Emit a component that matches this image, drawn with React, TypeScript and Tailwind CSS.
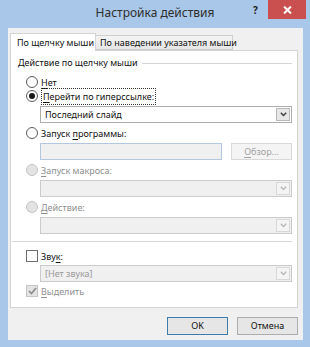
import React from 'react';

const font = { fontFamily: '"Noto Sans", "DejaVu Sans", sans-serif' };

const Chevron = ({ disabled }: { disabled?: boolean }) => (
    <svg width="7" height="5" viewBox="0 0 7 5">
        <path d="M0.8 0.8 L3.5 3.6 L6.2 0.8" fill="none" stroke={disabled ? '#b8b8b8' : '#3c3c3c'} strokeWidth="1.4" />
    </svg>
);

const Dropdown = ({ text, disabled, grayText }: { text?: string; disabled?: boolean; grayText?: boolean }) => (
    <div
        className={`flex items-center h-[17px] border ${
            disabled ? 'border-[#cbcbcb] bg-[#f0f0f0]' : 'border-[#adadad] bg-white'
        }`}
    >
        <span className={`flex-1 pl-[4px] leading-none ${grayText ? 'text-[#9a9a9a]' : 'text-[#111]'}`}>{text}</span>
        <div
            className={`w-[14px] h-[13px] mr-[1px] flex items-center justify-center border ${
                disabled ? 'border-[#d8d8d8] bg-[#f4f4f4]' : 'border-[#b9b9b9] bg-[#e6e6e6]'
            }`}
        >
            <Chevron disabled={disabled} />
        </div>
    </div>
);

const Radio = ({ checked, disabled, children }: { checked?: boolean; disabled?: boolean; children: React.ReactNode }) => (
    <div className="flex items-center h-[16px] gap-[3px]">
        <div
            className={`w-[12px] h-[12px] rounded-full border flex items-center justify-center ${
                disabled ? 'border-[#c4c4c4] bg-[#e3e3e3]' : 'border-[#5a5a5a] bg-white'
            }`}
        >
            {checked && <div className="w-[6px] h-[6px] rounded-full bg-[#1a1a1a]" />}
        </div>
        <span className={`leading-none ${disabled ? 'text-[#8f8f8f]' : 'text-[#111]'}`}>{children}</span>
    </div>
);

const U = ({ children }: { children: React.ReactNode }) => <span className="underline underline-offset-2">{children}</span>;

export default function App() {
    return (
        <div className="w-[310px] h-[347px] bg-[#a9c7e8] flex flex-col text-[9px] whitespace-nowrap" style={font}>
            {/* Title bar */}
            <div className="relative h-[28px] flex items-center justify-center">
                <span className="text-[12px] text-[#2e2e2e] pb-[2px]">Настройка действия</span>
                <span className="absolute left-[253px] top-[3px] text-[10px] font-bold text-[#222]">?</span>
                <div className="absolute left-[268px] top-0 w-[38px] h-[19px] bg-[#c9504e] flex items-center justify-center">
                    <svg width="9" height="8" viewBox="0 0 9 8">
                        <path d="M1 0.5 L8 7.5 M8 0.5 L1 7.5" stroke="white" strokeWidth="2" />
                    </svg>
                </div>
            </div>

            {/* Client area */}
            <div className="ml-[8px] mr-[7px] h-[312px] bg-[#f0f0f0] flex flex-col">
                {/* Tabs */}
                <div className="mt-[5px] ml-[2px] flex items-end h-[17px] relative z-10">
                    <div className="w-[86px] h-[18px] -mb-px bg-white border border-b-0 border-[#d4d4d4] flex items-center pl-[6px] text-[#111]">
                        По щелчку мыши
                    </div>
                    <div className="w-[137px] h-[15px] border border-l-0 border-[#cfcfcf] bg-gradient-to-b from-[#f4f4f4] to-[#e6e6e6] flex items-center pl-[4px] text-[#111]">
                        По наведении указателя мыши
                    </div>
                </div>

                {/* Panel */}
                <div className="ml-[2px] w-[288px] h-[258px] bg-white border border-[#d4d4d4] flex flex-col">
                    {/* Group header */}
                    <div className="mt-[4px] h-[16px] flex items-center pl-[7px] pr-[5px] gap-[4px]">
                        <span className="text-[#111]">Действие по щелчку мыши</span>
                        <div className="flex-1 h-px bg-[#d5d5d5]" />
                    </div>

                    <div className="pl-[15px] pr-[5px] flex flex-col">
                        <div className="mt-[3px]">
                            <Radio>
                                <U>Н</U>ет
                            </Radio>
                        </div>
                        <div className="-mt-[2px]">
                            <Radio checked>
                                <span className="border border-dotted border-[#333] px-[1px] py-[1px]">
                                    <U>П</U>ерейти по гиперссылке:
                                </span>
                            </Radio>
                        </div>
                        <div className="pl-[14px] mt-[2px]">
                            <Dropdown text="Последний слайд" />
                        </div>

                        <div className="mt-[2px]">
                            <Radio>
                                Запуск <U>п</U>рограммы:
                            </Radio>
                        </div>
                        <div className="pl-[14px] mt-[2px] flex gap-[9px]">
                            <div className="w-[182px] h-[17px] border border-[#b3c7e0] bg-[#f0f0f0]" />
                            <div className="flex-1 h-[17px] border border-[#d9d9d9] bg-[#f4f4f4] flex items-center justify-center text-[#a3a3a3]">
                                <span>
                                    <U>О</U>бзор...
                                </span>
                            </div>
                        </div>

                        <div className="mt-[2px]">
                            <Radio disabled>
                                <U>З</U>апуск макроса:
                            </Radio>
                        </div>
                        <div className="pl-[14px] mt-[2px]">
                            <Dropdown disabled />
                        </div>

                        <div className="mt-[2px]">
                            <Radio disabled>
                                <U>Д</U>ействие:
                            </Radio>
                        </div>
                        <div className="pl-[14px] mt-[2px]">
                            <Dropdown disabled />
                        </div>
                    </div>

                    {/* Separator */}
                    <div className="mt-[7px] ml-[1px] mr-[5px] h-px bg-[#d5d5d5]" />

                    <div className="pl-[15px] pr-[5px] flex flex-col mt-[6px]">
                        <div className="flex items-center h-[16px] gap-[3px]">
                            <div className="w-[12px] h-[12px] border border-[#6a6a6a] bg-white" />
                            <span className="text-[#111] leading-none">
                                Зву<U>к</U>:
                            </span>
                        </div>
                        <div className="pl-[14px] mt-[1px]">
                            <Dropdown text="[Нет звука]" disabled grayText />
                        </div>
                        <div className="flex items-center h-[16px] gap-[3px] mt-[1px]">
                            <div className="w-[12px] h-[12px] border border-[#c4c4c4] bg-[#e3e3e3] flex items-center justify-center">
                                <svg width="9" height="8" viewBox="0 0 9 8">
                                    <path d="M1 4 L3.5 6.5 L8 1" fill="none" stroke="#8a8a8a" strokeWidth="1.6" />
                                </svg>
                            </div>
                            <span className="text-[#8f8f8f] leading-none">
                                <U>В</U>ыделить
                            </span>
                        </div>
                    </div>
                </div>

                {/* Buttons */}
                <div className="mt-[9px] flex justify-end gap-[9px] pr-[5px]">
                    <div className="w-[61px] h-[18px] border border-[#3d7bad] bg-[#e6e6e6] flex items-center justify-center text-[#111]">
                        OK
                    </div>
                    <div className="w-[61px] h-[18px] border border-[#adadad] bg-[#e6e6e6] flex items-center justify-center text-[#111]">
                        Отмена
                    </div>
                </div>
            </div>
        </div>
    );
}
